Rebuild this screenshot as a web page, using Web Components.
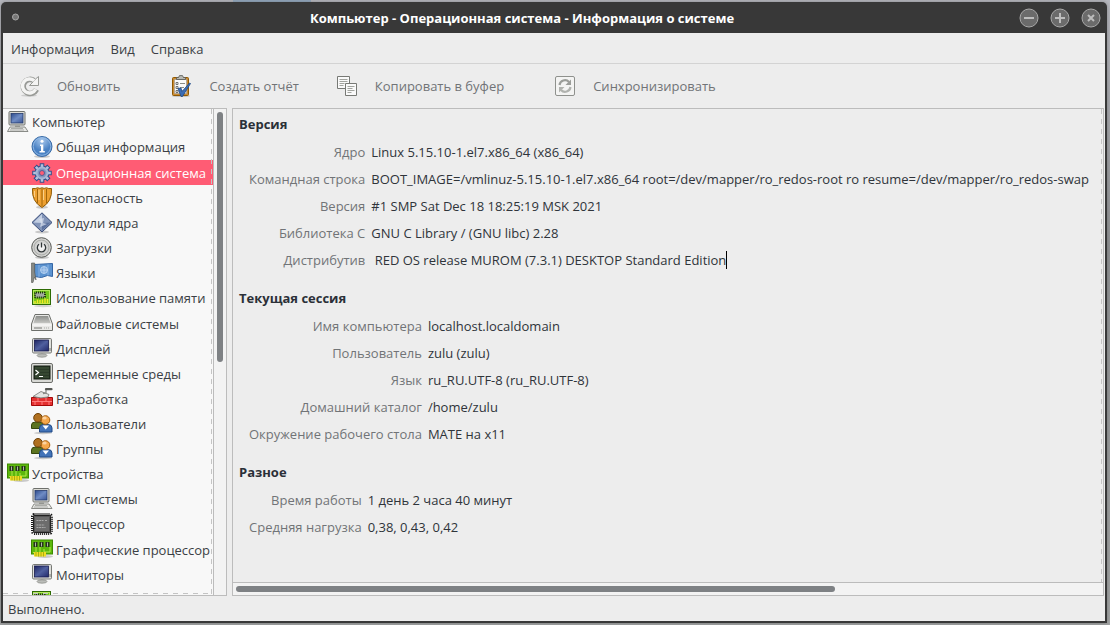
<!DOCTYPE html>
<html lang="ru">
<head>
<meta charset="utf-8">
<title>Информация о системе</title>
<style>
  body {
    --fg: #3b3f45;
    --muted: #717477;
    --line: #bcbcbc;
    --frame: #383838;
    --accent: #ff5c74;
    box-sizing: border-box;
    height: 100vh;
    margin: 0;
    padding: 2px 3px 2px 1px;
    overflow: hidden;
    background:
      linear-gradient(90deg, transparent 21%, #93a9c0 21% 28%, transparent 28%) top / 100% 2px no-repeat,
      linear-gradient(#b8b9c0, #8f9193 40%, #a2a4a4);
    color: var(--fg);
    font: 13px/18px "Open Sans", "Noto Sans", sans-serif;
  }
</style>
</head>
<body>
<hw-window caption="Компьютер - Операционная система - Информация о системе">
  <hw-menubar slot="menu">
    <hw-menu>Информация</hw-menu>
    <hw-menu>Вид</hw-menu>
    <hw-menu>Справка</hw-menu>
  </hw-menubar>
  <hw-toolbar slot="toolbar">
    <hw-tool icon="refresh" group-end>Обновить</hw-tool>
    <hw-tool icon="report">Создать отчёт</hw-tool>
    <hw-tool icon="copy" group-end>Копировать в буфер</hw-tool>
    <hw-tool icon="sync">Синхронизировать</hw-tool>
  </hw-toolbar>
  <hw-tree>
    <hw-tree-item icon="computer" root>Компьютер</hw-tree-item>
    <hw-tree-item icon="info" tall>Общая информация</hw-tree-item>
    <hw-tree-item icon="gear" selected>Операционная система</hw-tree-item>
    <hw-tree-item icon="shield">Безопасность</hw-tree-item>
    <hw-tree-item icon="module">Модули ядра</hw-tree-item>
    <hw-tree-item icon="power">Загрузки</hw-tree-item>
    <hw-tree-item icon="flag">Языки</hw-tree-item>
    <hw-tree-item icon="memory" tall>Использование памяти</hw-tree-item>
    <hw-tree-item icon="drive">Файловые системы</hw-tree-item>
    <hw-tree-item icon="monitor">Дисплей</hw-tree-item>
    <hw-tree-item icon="terminal">Переменные среды</hw-tree-item>
    <hw-tree-item icon="devel">Разработка</hw-tree-item>
    <hw-tree-item icon="users">Пользователи</hw-tree-item>
    <hw-tree-item icon="users">Группы</hw-tree-item>
    <hw-tree-item icon="card" root>Устройства</hw-tree-item>
    <hw-tree-item icon="computer">DMI системы</hw-tree-item>
    <hw-tree-item icon="cpu" tall>Процессор</hw-tree-item>
    <hw-tree-item icon="card">Графические процессор</hw-tree-item>
    <hw-tree-item icon="monitor">Мониторы</hw-tree-item>
    <hw-tree-item icon="memory"></hw-tree-item>
  </hw-tree>
  <hw-details></hw-details>
  <hw-status slot="status">Выполнено.</hw-status>
</hw-window>

<script>
const icons = {
  computer: `
    <linearGradient id="a" x2="1" y2="1"><stop stop-color="#2c4a8c"/><stop offset=".5" stop-color="#6f8cc4"/><stop offset="1" stop-color="#3a5596"/></linearGradient>
    <rect x="2" y=".5" width="16" height="13.5" rx="1" fill="#dcdcd6" stroke="#6e706c"/>
    <rect x="4" y="2.500" width="12" height="9.500" fill="url(#a)" stroke="#253a6b" stroke-width=".8"/>
    <path d="M8 14h5v2H8z" fill="#a5a7a3"/>
    <path d="M3 16h15l3 4.500H.5z" fill="#e9e9e6" stroke="#7d7f7b" stroke-width=".9"/>
    <path d="M4 17.500h12M3 19h14" stroke="#9b9d99" stroke-width=".8"/>`,
  info: `
    <radialGradient id="a" cy=".2"><stop stop-color="#a8c8ec"/><stop offset="1" stop-color="#4a82c4"/></radialGradient>
    <ellipse cx="11" cy="20.500" rx="8" ry="1.500" fill="#999" opacity=".5"/>
    <circle cx="11" cy="10.500" r="10" fill="url(#a)" stroke="#386aa6"/>
    <circle cx="11" cy="10.500" r="8.800" fill="none" stroke="#9cc0e8" stroke-width=".8"/>
    <circle cx="11" cy="5.300" r="1.500" fill="#fff"/>
    <path d="M9 8.500h3.300v6.500h1.500v1.500H8.500V15H10v-5H9z" fill="#fff"/>`,
  gear: `
    <path d="M11 1.200v19.600M1.200 11h19.600M4.100 4.100l13.800 13.800M17.900 4.100 4.100 17.900" stroke="#34508c" stroke-width="4.600"/>
    <circle cx="11" cy="11" r="7.500" fill="#34508c"/>
    <path d="M11 2.200v17.600M2.200 11h17.600M4.800 4.800l12.400 12.400M17.200 4.800 4.800 17.200" stroke="#b4c2dc" stroke-width="2.600"/>
    <circle cx="11" cy="11" r="6.500" fill="#a6b6d6"/>
    <circle cx="11" cy="11" r="4.500" fill="#8195bd"/>
    <circle cx="11" cy="11" r="2.500" fill="#ff5c74" stroke="#3c5894" stroke-width=".8"/>`,
  shield: `
    <ellipse cx="11" cy="20.300" rx="6" ry="1.500" fill="#999" opacity=".5"/>
    <path d="M1.500 1.500Q4.500 2 6.500.8 9 2 11 .8q2 1.200 4.500 0 2 1.200 5 .7 1 13-9.500 19-10.500-6-9.500-19z" fill="#eda031" stroke="#8f5902"/>
    <path d="M6.500 2v14M11 2v17M15.500 2v14" stroke="#a3660a"/>
    <path d="M3.500 4v6M8 3v10M12.500 3v10" stroke="#fbd08a"/>`,
  module: `
    <ellipse cx="11" cy="20" rx="7" ry="1.500" fill="#999" opacity=".5"/>
    <path d="M11 .8 21 10.500 11 20 1 10.500z" fill="#8294b8" stroke="#374b78"/>
    <path d="M11 2v9l-8.500-.5z" fill="#c2cee2"/>
    <path d="M11 11l8.500-.5L11 18.500z" fill="#5d729e"/>
    <path d="M8 7l5-1-1 5 4 1-7 3 1-4z" fill="#dbe3f0" opacity=".7"/>`,
  power: `
    <radialGradient id="a"><stop stop-color="#fff"/><stop offset="1" stop-color="#c6c6c4"/></radialGradient>
    <ellipse cx="11" cy="20.500" rx="7" ry="1.500" fill="#999" opacity=".5"/>
    <circle cx="10.500" cy="10.500" r="9.800" fill="#d4d4d2" stroke="#555753"/>
    <circle cx="10.500" cy="10.500" r="7.500" fill="url(#a)" stroke="#a0a29e" stroke-width=".8"/>
    <path d="M8 7.300a4.200 4.200 0 1 0 5 0M10.500 5.500v5" fill="none" stroke="#2e3436" stroke-width="1.300"/>`,
  flag: `
    <path d="M3.500 2.500 21.500 1.500v13l-5-1-6 2-7-1z" fill="#5b93d0" stroke="#3465a4"/>
    <path d="M8 3v12M17 2.500v11" stroke="#8fb7e4" stroke-width="1.500" opacity=".6"/>
    <circle cx="13" cy="8" r="3.500" fill="#84afe0" stroke="#c3daf3" stroke-width=".8"/>
    <path d="M9.500 8h7M13 4.500v7" stroke="#c3daf3" stroke-width=".7"/>
    <path d="M.5 1h3.200v9L5 18l-1.500-3L2 20.500H.5z" fill="#888a85" stroke="#555753" stroke-width=".6"/>`,
  memory: `
    <ellipse cx="12" cy="19" rx="9" ry="1.200" fill="#999" opacity=".4"/>
    <rect x="1.500" y="2.500" width="18" height="15" fill="#73c71a" stroke="#2d6b04"/>
    <rect x="2.500" y="3.500" width="16" height="13" fill="none" stroke="#b4ea5c"/>
    <rect x="4" y="5.500" width="10" height="5" rx="1" fill="#a3aa9e" stroke="#1c3010" stroke-width="2" stroke-dasharray="1 1"/>
    <path d="M4 16.500V14M6.500 16.500v-4M9 16.500V13M11.500 16.500v-4M14 16.500v-5M16.500 16.500V12" stroke="#f5e626" stroke-width="1.500"/>`,
  drive: `
    <linearGradient id="a" y2="1" x2="0"><stop stop-color="#8c8e8b"/><stop offset="1" stop-color="#c4c5c2"/></linearGradient>
    <path d="M4 1.500h14l3.500 9.500v6.500H.5V11z" fill="#e8e8e6" stroke="#6d6f6b"/>
    <path d="M5 3h12l2.500 7h-17z" fill="url(#a)"/>
    <path d="M1.500 12h19" stroke="#fff"/>
    <path d="M3 15h8" stroke="#777975"/>
    <path d="M13 15h6" stroke="#a9aba7" stroke-dasharray="1 1"/>`,
  monitor: `
    <linearGradient id="a" x2="1" y2="1"><stop stop-color="#1d2460"/><stop offset=".5" stop-color="#50609f"/><stop offset="1" stop-color="#22296a"/></linearGradient>
    <ellipse cx="11" cy="17.500" rx="5" ry="1.700" fill="#bbbdb9" stroke="#858783" stroke-width=".7"/>
    <rect x="1.500" y=".5" width="19" height="14.500" rx="1.200" fill="#dfe0dc" stroke="#777975"/>
    <rect x="3.500" y="2" width="14" height="11" fill="url(#a)" stroke="#171b4e" stroke-width=".8"/>
    <path d="M19 10v3" stroke="#777975"/>`,
  terminal: `
    <rect x=".5" y=".5" width="21" height="19" rx="1.500" fill="#d8d9d5" stroke="#6d6f6b"/>
    <rect x="3" y="3" width="16" height="13" fill="#2b3a28" stroke="#151c12"/>
    <path d="M4 5h14M4 8h14M4 11h14M4 14h14" stroke="#465c40" stroke-width=".8"/>
    <path d="M4.500 7l3 2.500-3 2.500M8 13.500h4" fill="none" stroke="#fff" stroke-width="1.200"/>`,
  devel: `
    <path d="M.5 9.500h21v8H.5z" fill="#e33030" stroke="#a40808"/>
    <path d="M1 13.500h20M7 10v3M15 10v3M4 14v3M11 14v3M18 14v3" stroke="#ff7c7c"/>
    <path d="M2 8.500l8-5 8 3-1 2.500q-7 2-15-.5z" fill="#e4e5e2" stroke="#7d7f7b" stroke-width=".9"/>
    <path d="M12 5.500l3-.5V1.500" fill="none" stroke="#888a85" stroke-width="1.300"/>
    <path d="M15 1.200h5.500" stroke="#555753" stroke-width="2.200" stroke-linecap="round"/>`,
  users: `
    <ellipse cx="12" cy="20" rx="9" ry="1.200" fill="#999" opacity=".5"/>
    <path d="M.5 15.500V12q0-3 4-3h4q4 0 4 4v2.500z" fill="#5c7420" stroke="#36470c"/>
    <circle cx="7" cy="4.800" r="4.300" fill="#b07020" stroke="#6d3f04"/>
    <path d="M8.500 19v-4q0-3.500 4-3.500h4.500q4 0 4 3.500v4z" fill="#4273b8" stroke="#204a87"/>
    <path d="M11.500 12.500l3.200 4 3.300-4z" fill="#fff"/>
    <circle cx="14.500" cy="7" r="4.300" fill="#f5a84c" stroke="#a85f0c"/>
    <ellipse cx="13.500" cy="5" rx="2.200" ry="1.500" fill="#fbd3a0"/>`,
  card: `
    <ellipse cx="14" cy="17.500" rx="8" ry="1.500" fill="#999" opacity=".5"/>
    <rect x=".5" y="1" width="21" height="14" fill="#5cb80c" stroke="#3d8a00"/>
    <path d="M2 13.500h4M5 8v6M9 8v5M13 10v3h6V8" fill="none" stroke="#b0e84a"/>
    <path d="M2.500 3h4v5h-4zM8.500 3h4v5h-4zM14.500 3h4v5h-4z" fill="#24331a"/>
    <path d="M4.500 3.500v4M10.500 3.500v4M16.500 3.500v4" stroke="#aebba4"/>
    <path d="M3 13v4.500h12V13" fill="#f0dc22"/>
    <path d="M5 13v4.500M7.500 13v4.500M10 13v4.500M12.500 13v4.500" stroke="#98a60c" stroke-width=".8"/>`,
  cpu: `
    <rect x="1.500" y="1.500" width="19" height="19" rx="2" fill="#ddd" stroke="#181818" stroke-width="3" stroke-dasharray="1 1"/>
    <rect x="2.500" y="2.500" width="17" height="17" rx="1" fill="#555" stroke="#222"/>
    <rect x="4" y="4" width="14" height="14" fill="#6c6c6c"/>
    <path d="M5.500 7.500h7M14 7.500h2.500M5.500 12h8M5.500 14.500h9" stroke="#aaa" stroke-dasharray="2 .6"/>`,
  refresh: `
    <ellipse cx="11" cy="20.500" rx="8" ry="1.200" fill="#aaa" opacity=".5"/>
    <path d="M18.500 14.500A7 7 0 1 1 16 5.500" fill="none" stroke="#989a96" stroke-width="5.500"/>
    <path d="M20.500 1.500v9H11.500l3.500-3.500 2.500-3z" fill="#f4f4f3" stroke="#989a96"/>
    <path d="M17.700 14.200A7 7 0 1 1 16.200 5.800" fill="none" stroke="#f4f4f3" stroke-width="3.500"/>`,
  report: `
    <ellipse cx="11" cy="21" rx="9" ry="1" fill="#999" opacity=".5"/>
    <rect x="2.500" y="2.500" width="16" height="18" rx="1" fill="#c98a32" stroke="#8f5902"/>
    <path d="M4.500 4.500h12v14h-12z" fill="#fafafa" stroke="#999" stroke-width=".6"/>
    <path d="M6.500 4.500v-2h2L9.500.6h3l1 1.900h2v2z" fill="#b7b9b4" stroke="#555753" stroke-width=".8"/>
    <path d="M6 7.500h2v2H6zM6 11.500h2v2H6zM6 15.500h2v2H6z" fill="#fff" stroke="#555753" stroke-width=".8"/>
    <path d="M10 8.500h5M10 12.500h4M10 16h3" stroke="#888a85"/>
    <path d="M8 13.500l3-.5 1 3.500L19.500 8l1 .5L12.500 21.500h-1.500z" fill="#3c6db4" stroke="#204a87" stroke-width=".8"/>`,
  copy: `
    <path d="M1.500 1.500h12v12h-12z" fill="#fafafa" stroke="#777975"/>
    <path d="M3.500 4.500h8M3.500 6.500h8M3.500 8.500h5M3.500 10.500h4" stroke="#a2a49f"/>
    <path d="M9.500 8.500h11v12h-11z" fill="#fafafa" stroke="#777975"/>
    <path d="M11.500 11.500h7M11.500 13.500h5M11.500 15.500h7M11.500 17.500h4" stroke="#a2a49f"/>`,
  sync: `
    <rect x="1.500" y="1.500" width="19" height="19" rx="1.500" fill="#f4f4f3" stroke="#8f918d"/>
    <path d="M5.500 10A5.500 5.500 0 0 1 15 7" fill="none" stroke="#9b9d99" stroke-width="2.200"/>
    <path d="M17 4.500v5.500h-5.500z" fill="#9b9d99"/>
    <path d="M16.500 12A5.500 5.500 0 0 1 7 15" fill="none" stroke="#b0b2ae" stroke-width="2.200"/>
    <path d="M5 17.500V12h5.500z" fill="#b0b2ae"/>`
};

const icon = (name) =>
  `<svg width="22" height="22" viewBox="0 0 22 22" aria-hidden="true">${icons[name]}</svg>`;

class HwElement extends HTMLElement {
  constructor() {
    super();
    this.attachShadow({ mode: "open" });
  }

  connectedCallback() {
    this.shadowRoot.innerHTML = this.render();
  }
}

class HwWindow extends HwElement {
  render() {
    return `
      <style>
        :host {
          box-sizing: border-box;
          display: flex;
          flex-direction: column;
          height: 100%;
          padding: 0 2px 2px;
          border-radius: 5px 5px 0 0;
          background: var(--frame);
          box-shadow: 0 0 4px #5558;
        }
        header {
          display: flex;
          align-items: center;
          height: 31px;
          padding: 0 4px 0 8px;
          color: #fff;
        }
        h1 { flex: 1; margin: 0; font-size: 13px; line-height: 18px; text-align: center; white-space: nowrap; }
        button { display: block; padding: 0; border: 0; background: none; }
        svg { display: block; }
        .controls { display: flex; gap: 11px; }
        .client { flex: 1; min-height: 0; display: flex; flex-direction: column; background: #ededed; }
        main { flex: 1; min-height: 0; display: flex; gap: 5px; padding-right: 1px; }
      </style>
      <header>
        <button aria-label="Меню окна"><svg width="14" height="14"><circle cx="4.500" cy="6" r="3" fill="#777" stroke="#aaa"/></svg></button>
        <h1>${this.getAttribute("caption")}</h1>
        <div class="controls">
          ${this.control("Свернуть", "M5 10h10")}
          ${this.control("Развернуть", "M5 10h10M10 5v10")}
          ${this.control("Закрыть", "M7 7l6 6M13 7l-6 6")}
        </div>
      </header>
      <div class="client">
        <slot name="menu"></slot>
        <slot name="toolbar"></slot>
        <main><slot></slot></main>
        <slot name="status"></slot>
      </div>`;
  }

  control(label, path) {
    return `<button aria-label="${label}"><svg width="20" height="20">
      <circle cx="10" cy="10" r="9" fill="#6b6b6b" stroke="#a9a9a9"/>
      <path d="${path}" stroke="#bdbdbd" stroke-width="2"/></svg></button>`;
  }
}
customElements.define("hw-window", HwWindow);

class HwMenubar extends HwElement {
  render() {
    return `
      <style>
        :host { display: flex; gap: 16px; padding: 7px 8px 5px; border-bottom: 1px solid #d3d3d3; }
      </style>
      <slot></slot>`;
  }
}
customElements.define("hw-menubar", HwMenubar);

class HwMenu extends HwElement {
  render() {
    return `
      <style>
        :host { display: block; }
        button { display: block; padding: 0; border: 0; background: none; color: inherit; font: inherit; }
      </style>
      <button><slot></slot></button>`;
  }
}
customElements.define("hw-menu", HwMenu);

class HwToolbar extends HwElement {
  render() {
    return `
      <style>
        :host { display: flex; align-items: center; gap: 37px; height: 44px; padding-left: 15px; }
      </style>
      <slot></slot>`;
  }
}
customElements.define("hw-toolbar", HwToolbar);

class HwTool extends HwElement {
  render() {
    return `
      <style>
        :host { display: block; }
        :host([group-end]) { margin-right: 13px; }
        button {
          display: flex;
          align-items: center;
          gap: 17px;
          padding: 0;
          border: 0;
          background: none;
          color: var(--muted);
          font: inherit;
          white-space: nowrap;
        }
      </style>
      <button>${icon(this.getAttribute("icon"))}<span><slot></slot></span></button>`;
  }
}
customElements.define("hw-tool", HwTool);

class HwScrollbar extends HwElement {
  render() {
    return `
      <style>
        :host { display: block; flex: none; padding: 3px; background: #f3f3f3; }
        :host([vertical]) { width: 6px; border-left: 1px solid var(--line); }
        :host(:not([vertical])) { height: 6px; border-top: 1px solid var(--line); }
        div { border-radius: 3px; background: #7e8184; }
        :host([vertical]) div { height: ${this.getAttribute("size")}; }
        :host(:not([vertical])) div { width: ${this.getAttribute("size")}; height: 6px; }
      </style>
      <div></div>`;
  }
}
customElements.define("hw-scrollbar", HwScrollbar);

class HwTree extends HwElement {
  render() {
    return `
      <style>
        :host {
          box-sizing: border-box;
          flex: none;
          display: flex;
          width: 224px;
          border: 1px solid var(--line);
          border-left: 0;
          background: #f8f8f8;
        }
        nav { position: relative; flex: 1; min-width: 0; overflow: hidden; }
        /* dashes mark the sides with more content to scroll to */
        nav::after {
          content: "";
          position: absolute;
          inset: 0 1px 1px 0;
          background:
            repeating-linear-gradient(#c4c4c4 0 5px, transparent 5px 10px) right / 1px 100% no-repeat,
            repeating-linear-gradient(90deg, #c4c4c4 0 5px, transparent 5px 10px) bottom / 100% 1px no-repeat;
          pointer-events: none;
        }
      </style>
      <nav aria-label="Разделы"><slot></slot></nav>
      <hw-scrollbar vertical size="52%"></hw-scrollbar>`;
  }
}
customElements.define("hw-tree", HwTree);

class HwTreeItem extends HwElement {
  render() {
    return `
      <style>
        :host { display: block; height: 25px; }
        :host([tall]) { height: 26px; }
        :host([selected]) { background: var(--accent); color: #fff; }
        button {
          display: flex;
          align-items: center;
          gap: 3px;
          width: 100%;
          height: 100%;
          padding: 0 0 0 28px;
          border: 0;
          background: none;
          color: inherit;
          font: inherit;
          white-space: nowrap;
        }
        :host([root]) button { padding-left: 4px; }
        svg { flex: none; }
      </style>
      <button>${icon(this.getAttribute("icon"))}<span><slot></slot></span></button>`;
  }
}
customElements.define("hw-tree-item", HwTreeItem);

const sections = [
  {
    title: "Версия",
    rows: [
      ["Ядро", "Linux 5.15.10-1.el7.x86_64 (x86_64)"],
      ["Командная строка", "BOOT_IMAGE=/vmlinuz-5.15.10-1.el7.x86_64 root=/dev/mapper/ro_redos-root ro resume=/dev/mapper/ro_redos-swap"],
      ["Версия", "#1 SMP Sat Dec 18 18:25:19 MSK 2021"],
      ["Библиотека C", "GNU C Library / (GNU libc) 2.28"],
      ["Дистрибутив", ` RED OS release MUROM (7.3.1) DESKTOP Standard Edition<i class="caret"></i>`]
    ]
  },
  {
    title: "Текущая сессия",
    rows: [
      ["Имя компьютера", "localhost.localdomain"],
      ["Пользователь", "zulu (zulu)"],
      ["Язык", "ru_RU.UTF-8 (ru_RU.UTF-8)"],
      ["Домашний каталог", "/home/zulu"],
      ["Окружение рабочего стола", "MATE на x11"]
    ]
  },
  {
    title: "Разное",
    rows: [
      ["Время работы", "1 день 2 часа 40 минут"],
      ["Средняя нагрузка", "0,38, 0,43, 0,42"]
    ]
  }
];

class HwDetails extends HwElement {
  render() {
    return `
      <style>
        :host {
          flex: 1;
          min-width: 0;
          display: flex;
          flex-direction: column;
          border: 1px solid var(--line);
        }
        .view { position: relative; flex: 1; min-height: 0; padding: 2px 0 0 6px; overflow: hidden; }
        .view::after {
          content: "";
          position: absolute;
          inset: 0 1px 0 auto;
          width: 1px;
          background: repeating-linear-gradient(#c4c4c4 0 5px, transparent 5px 10px);
        }
        section { margin-bottom: 12px; }
        h2 { margin: 0; color: #2b3038; font-size: 13px; line-height: 27px; }
        table { margin-left: 10px; border-collapse: collapse; }
        th, td { height: 27px; padding: 0; white-space: pre; }
        th { padding-right: 6px; color: var(--muted); font-weight: 400; text-align: right; }
        td { color: #2f343a; }
        .caret { display: inline-block; width: 1px; height: 18px; background: #000; vertical-align: top; }
      </style>
      <div class="view">
        ${sections.map(({ title, rows }) => `
          <section>
            <h2>${title}</h2>
            <table>${rows.map(([label, value]) => `<tr><th scope="row">${label}</th><td>${value}</td></tr>`).join("")}</table>
          </section>`).join("")}
      </div>
      <hw-scrollbar size="69.3%"></hw-scrollbar>`;
  }
}
customElements.define("hw-details", HwDetails);

class HwStatus extends HwElement {
  render() {
    return `
      <style>
        :host { display: block; padding: 4px 5px 3px; }
      </style>
      <slot></slot>`;
  }
}
customElements.define("hw-status", HwStatus);
</script>
</body>
</html>
